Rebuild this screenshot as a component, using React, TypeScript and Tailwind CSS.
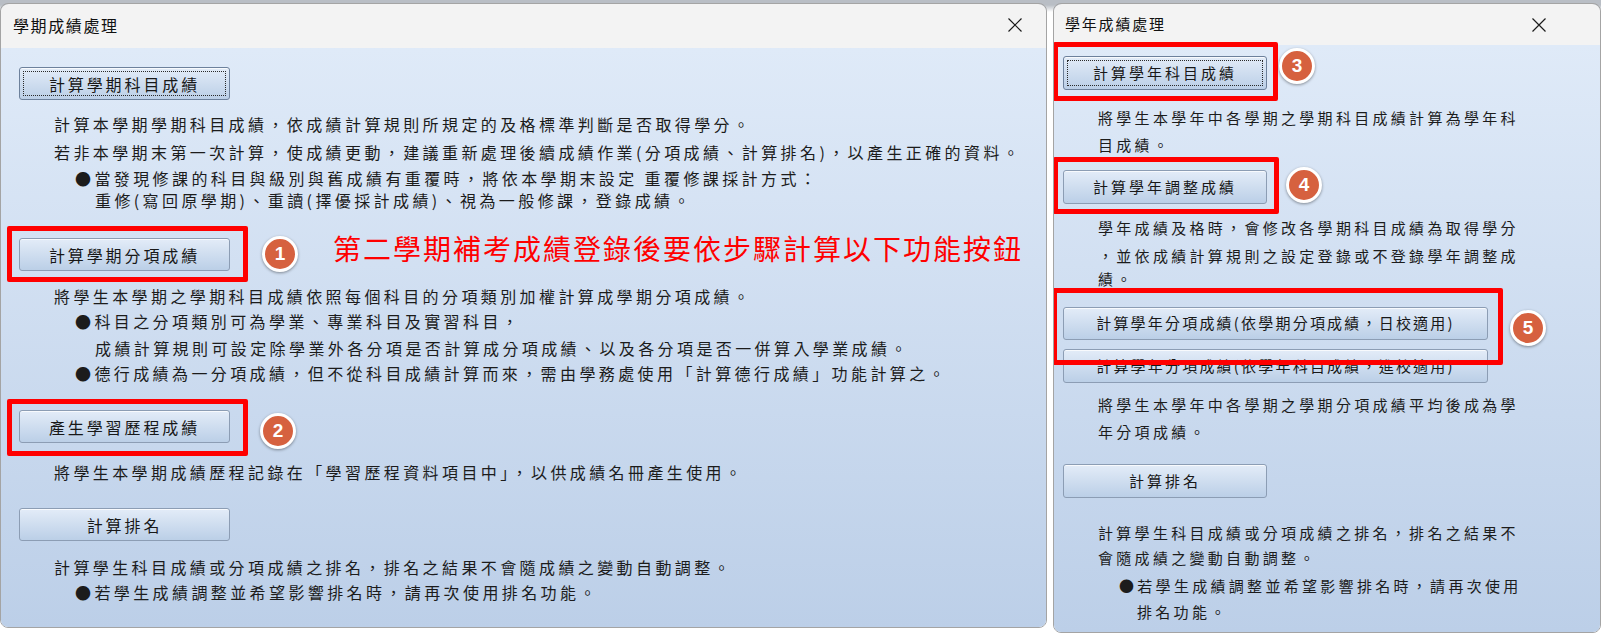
import React from "react";

type Kids = { children?: React.ReactNode };

function CloseIcon() {
  return (
    <svg width="16" height="16" viewBox="0 0 16 16" className="shrink-0">
      <path d="M1.5 1.5L14.5 14.5M14.5 1.5L1.5 14.5" stroke="#1b1b1b" strokeWidth="1.2" fill="none" />
    </svg>
  );
}

function Badge({ n, pos }: { n: number; pos: string }) {
  return (
    <div
      className={`absolute z-20 flex h-[36px] w-[36px] items-center justify-center rounded-full border-[3px] border-white bg-[#d6613f] font-['Liberation_Sans',Arial,sans-serif] text-[19px] font-bold text-white shadow-[0_1px_3px_rgba(0,0,0,0.4)] ${pos}`}
    >
      {n}
    </div>
  );
}

function Frame({ pos }: { pos: string }) {
  return <div className={`pointer-events-none absolute z-10 rounded-[2px] border-[5px] border-[#ff0000] ${pos}`} />;
}

function Btn({ label, size, focus, text }: { label: string; size: string; focus?: boolean; text: string }) {
  return (
    <button
      className={`relative flex shrink-0 items-center justify-center rounded-[3px] border bg-[linear-gradient(to_bottom,#e3ecf8,#bbcfe7)] text-[#181818] shadow-[inset_0_1px_0_rgba(255,255,255,0.75)] ${
        focus ? "border-[#6d819c]" : "border-[#8c9db4]"
      } ${size} ${text}`}
    >
      {focus && <span className="absolute inset-[3px] border border-dotted border-[#2a2a2a]" />}
      {label}
    </button>
  );
}

function Line({ children, cls }: Kids & { cls: string }) {
  return <div className={`h-[22px] whitespace-nowrap leading-[22px] ${cls}`}>{children}</div>;
}

function TitleBar({ title, cls, text }: { title: string; cls: string; text: string }) {
  return (
    <div className={`flex shrink-0 items-center justify-between rounded-t-[8px] bg-[#f3f3f3] text-[#111] ${cls} ${text}`}>
      <span>{title}</span>
      <CloseIcon />
    </div>
  );
}

const cjk = "font-['Noto_Sans_CJK_TC','Noto_Sans_CJK_SC',sans-serif]";

function SemesterWindow() {
  const t = "text-[16px] tracking-[3.4px] text-[#1c1c1c]";
  const b = "text-[16px] tracking-[2.9px]";
  return (
    <div className="flex h-[625px] w-[1047px] shrink-0 flex-col overflow-hidden rounded-[8px] border border-[#a4a4a4]">
      <TitleBar title="學期成績處理" cls="h-[44px] pl-[12px] pr-[23px] pb-[3px]" text="text-[16px] tracking-[1.6px]" />
      <div className="flex flex-1 flex-col bg-[linear-gradient(to_bottom,#dfeaf8,#bccfe8)] pl-[18px]">
        <div className="mt-[19px]">
          <Btn label="計算學期科目成績" size="h-[33px] w-[211px]" focus text={b} />
        </div>
        <Line cls={`mt-[13px] ml-[35px] ${t}`}>計算本學期學期科目成績，依成績計算規則所規定的及格標準判斷是否取得學分。</Line>
        <Line cls={`mt-[6px] ml-[35px] ${t}`}>若非本學期末第一次計算，使成績更動，建議重新處理後續成績作業(分項成績、計算排名)，以產生正確的資料。</Line>
        <Line cls={`mt-[4px] ml-[56px] ${t}`}>●當發現修課的科目與級別與舊成績有重覆時，將依本學期末設定 重覆修課採計方式：</Line>
        <Line cls={`mt-0 ml-[76px] ${t}`}>重修(寫回原學期)、重讀(擇優採計成績)、視為一般修課，登錄成績。</Line>

        <div className="mt-[27px] flex items-start">
          <div className="relative">
            <Btn label="計算學期分項成績" size="h-[33px] w-[211px]" text={b} />
            <Frame pos="left-[-12px] top-[-12px] h-[56px] w-[241px]" />
            <Badge n={1} pos="left-[243px] top-[-2px]" />
          </div>
          <div className="-mt-[6px] ml-[103px] whitespace-nowrap text-[28px] leading-[33px] tracking-[2px] text-[#ff0000]">
            第二學期補考成績登錄後要依步驟計算以下功能按鈕
          </div>
        </div>
        <Line cls={`mt-[14px] ml-[35px] ${t}`}>將學生本學期之學期科目成績依照每個科目的分項類別加權計算成學期分項成績。</Line>
        <Line cls={`mt-[3px] ml-[56px] ${t}`}>●科目之分項類別可為學業、專業科目及實習科目，</Line>
        <Line cls={`mt-[5px] ml-[76px] ${t}`}>成績計算規則可設定除學業外各分項是否計算成分項成績、以及各分項是否一併算入學業成績。</Line>
        <Line cls={`mt-[3px] ml-[56px] ${t}`}>●德行成績為一分項成績，但不從科目成績計算而來，需由學務處使用「計算德行成績」功能計算之。</Line>

        <div className="relative mt-[26px] w-[211px]">
          <Btn label="產生學習歷程成績" size="h-[33px] w-[211px]" text={b} />
          <Frame pos="left-[-12px] top-[-11px] h-[57px] w-[241px]" />
          <Badge n={2} pos="left-[241px] top-[3px]" />
        </div>
        <Line cls={`mt-[18px] ml-[35px] ${t}`}>將學生本學期成績歷程記錄在「學習歷程資料項目中」，以供成績名冊產生使用。</Line>

        <div className="mt-[25px]">
          <Btn label="計算排名" size="h-[33px] w-[211px]" text={b} />
        </div>
        <Line cls={`mt-[15px] ml-[35px] ${t}`}>計算學生科目成績或分項成績之排名，排名之結果不會隨成績之變動自動調整。</Line>
        <Line cls={`mt-[3px] ml-[56px] ${t}`}>●若學生成績調整並希望影響排名時，請再次使用排名功能。</Line>
      </div>
    </div>
  );
}

function YearWindow() {
  const t = "text-[15px] tracking-[3.3px] text-[#1c1c1c]";
  const b = "text-[15px] tracking-[3px]";
  const bw = "text-[15px] tracking-[2.2px]";
  return (
    <div className="flex h-[630px] w-[548px] shrink-0 flex-col overflow-hidden rounded-[8px] border border-[#a4a4a4]">
      <TitleBar title="學年成績處理" cls="h-[41px] pl-[11px] pr-[53px]" text="text-[15px] tracking-[1.8px]" />
      <div className="flex flex-1 flex-col bg-[linear-gradient(to_bottom,#dfeaf8,#bccfe8)] pl-[9px]">
        <div className="relative mt-[11px] w-[204px]">
          <Btn label="計算學年科目成績" size="h-[34px] w-[204px]" focus text={b} />
          <Frame pos="left-[-10px] top-[-14px] h-[59px] w-[225px]" />
          <Badge n={3} pos="left-[216px] top-[-8px]" />
        </div>
        <Line cls={`mt-[17px] ml-[35px] ${t}`}>將學生本學年中各學期之學期科目成績計算為學年科</Line>
        <Line cls={`mt-[5px] ml-[35px] ${t}`}>目成績。</Line>

        <div className="relative mt-[14px] w-[204px]">
          <Btn label="計算學年調整成績" size="h-[34px] w-[204px]" text={b} />
          <Frame pos="left-[-10px] top-[-13px] h-[57px] w-[226px]" />
          <Badge n={4} pos="left-[223px] top-[-3px]" />
        </div>
        <Line cls={`mt-[13px] ml-[35px] ${t}`}>學年成績及格時，會修改各學期科目成績為取得學分</Line>
        <Line cls={`mt-[6px] ml-[35px] ${t}`}>，並依成績計算規則之設定登錄或不登錄學年調整成</Line>
        <Line cls={`mt-[1px] ml-[35px] ${t}`}>績。</Line>

        <div className="relative mt-[17px] w-[425px]">
          <Btn label="計算學年分項成績(依學期分項成績，日校適用)" size="h-[33px] w-[425px]" text={bw} />
          <Frame pos="left-[-11px] top-[-19px] h-[77px] w-[451px]" />
          <Badge n={5} pos="left-[447px] top-[3px]" />
        </div>
        <div className="mt-[9px]">
          <Btn label="計算學年分項成績(依學年科目成績，進校適用)" size="h-[34px] w-[425px]" text={bw} />
        </div>
        <Line cls={`mt-[11px] ml-[35px] ${t}`}>將學生本學年中各學期之學期分項成績平均後成為學</Line>
        <Line cls={`mt-[5px] ml-[35px] ${t}`}>年分項成績。</Line>

        <div className="mt-[21px]">
          <Btn label="計算排名" size="h-[34px] w-[204px]" text={b} />
        </div>
        <Line cls={`mt-[24px] ml-[35px] ${t}`}>計算學生科目成績或分項成績之排名，排名之結果不</Line>
        <Line cls={`mt-[3px] ml-[35px] ${t}`}>會隨成績之變動自動調整。</Line>
        <Line cls={`mt-[6px] ml-[56px] ${t}`}>●若學生成績調整並希望影響排名時，請再次使用</Line>
        <Line cls={`mt-[4px] ml-[74px] ${t}`}>排名功能。</Line>
      </div>
    </div>
  );
}

export default function App() {
  return (
    <div
      className={`flex h-[636px] w-[1601px] gap-[6px] overflow-hidden bg-[linear-gradient(to_bottom,#b9bec5_0px,#b9bec5_5px,#ffffff_12px,#ffffff_100%)] pt-[3px] ${cjk}`}
    >
      <SemesterWindow />
      <YearWindow />
    </div>
  );
}
